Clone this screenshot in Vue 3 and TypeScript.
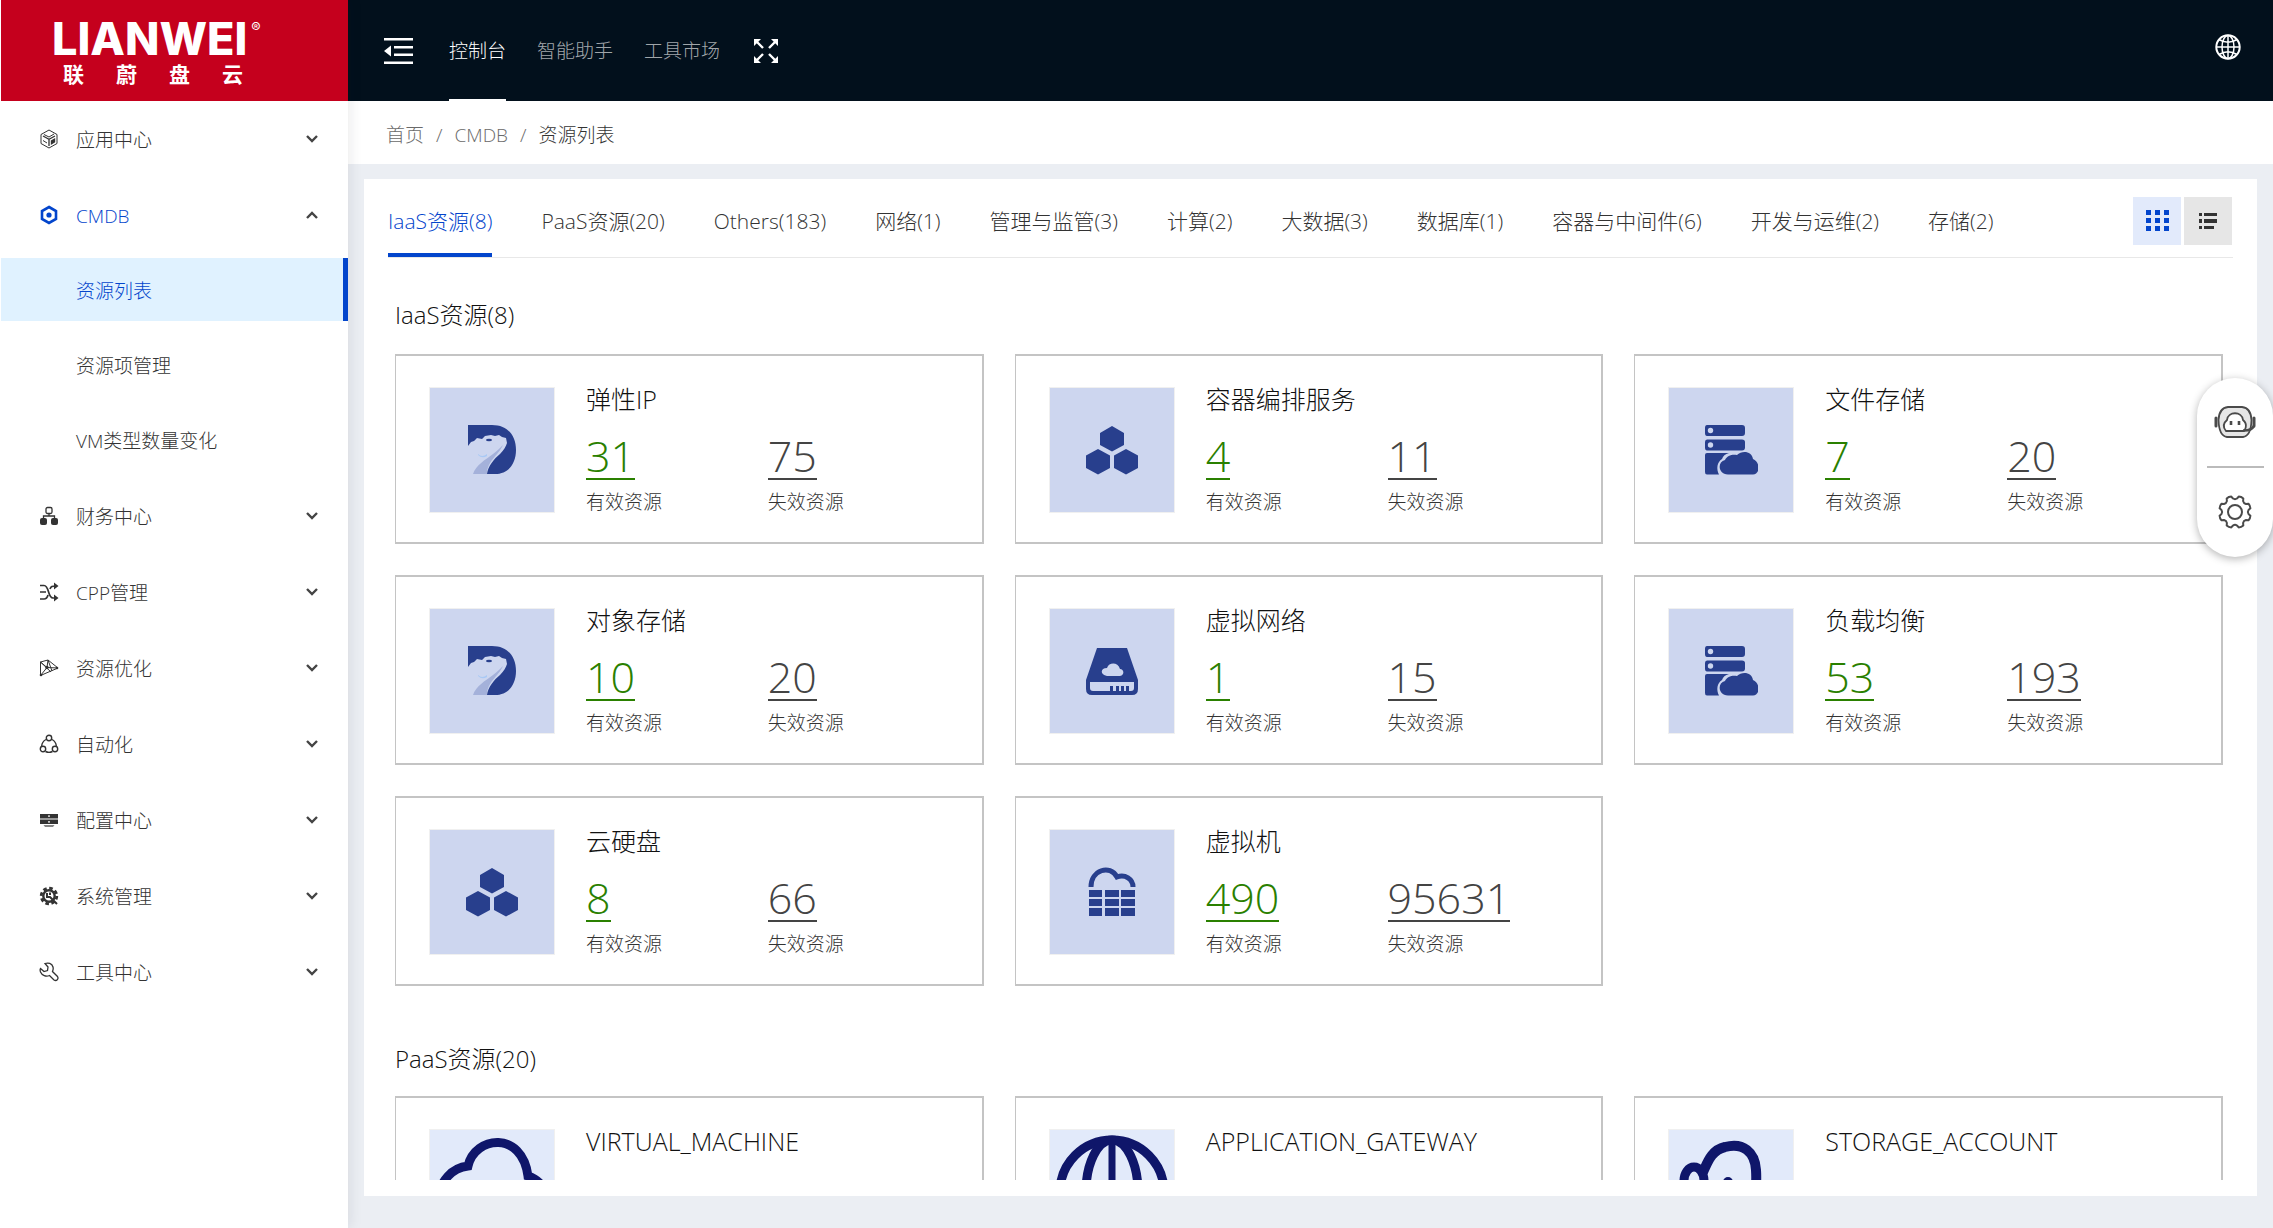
<script setup lang="ts">
import { ref } from 'vue'

interface MenuItem {
  label: string
  icon: string
  active?: boolean
  children?: string[]
}

interface Resource {
  name: string
  icon: string
  valid?: number
  invalid?: number
}

interface ResourceGroup {
  title: string
  light?: boolean
  items: Resource[]
}

const menu: MenuItem[] = [
  { label: '应用中心', icon: 'cube' },
  { label: 'CMDB', icon: 'hex', active: true, children: ['资源列表', '资源项管理', 'VM类型数量变化'] },
  { label: '财务中心', icon: 'tree' },
  { label: 'CPP管理', icon: 'shuffle' },
  { label: '资源优化', icon: 'mesh' },
  { label: '自动化', icon: 'cycle' },
  { label: '配置中心', icon: 'rack' },
  { label: '系统管理', icon: 'cog' },
  { label: '工具中心', icon: 'wrench' },
]

const topNav = ['控制台', '智能助手', '工具市场']

const tabs = [
  'IaaS资源(8)', 'PaaS资源(20)', 'Others(183)', '网络(1)', '管理与监管(3)', '计算(2)',
  '大数据(3)', '数据库(1)', '容器与中间件(6)', '开发与运维(2)', '存储(2)',
]
const activeTab = ref(0)
const view = ref<'grid' | 'list'>('grid')

// Outline of the eight-toothed settings gear, centred on (17, 17).
const gearPath = (() => {
  const at = (deg: number, r: number) => {
    const a = (deg * Math.PI) / 180
    return `${(17 + r * Math.cos(a)).toFixed(1)} ${(17 + r * Math.sin(a)).toFixed(1)}`
  }
  const parts: string[] = []
  for (let k = 0; k < 8; k++) {
    const c = 22.5 + k * 45
    parts.push(`${k ? 'L' : 'M'}${at(c - 14, 13.6)}L${at(c - 9, 15.8)}Q${at(c, 16.6)} ${at(c + 9, 15.8)}L${at(c + 14, 13.6)}Q${at(c + 22.5, 12.2)} ${at(c + 31, 13.6)}`)
  }
  return parts.join('') + 'Z'
})()

const groups: ResourceGroup[] = [
  {
    title: 'IaaS资源(8)',
    items: [
      { name: '弹性IP', icon: 'bear', valid: 31, invalid: 75 },
      { name: '容器编排服务', icon: 'hexes', valid: 4, invalid: 11 },
      { name: '文件存储', icon: 'server', valid: 7, invalid: 20 },
      { name: '对象存储', icon: 'bear', valid: 10, invalid: 20 },
      { name: '虚拟网络', icon: 'disk', valid: 1, invalid: 15 },
      { name: '负载均衡', icon: 'server', valid: 53, invalid: 193 },
      { name: '云硬盘', icon: 'hexes', valid: 8, invalid: 66 },
      { name: '虚拟机', icon: 'vm', valid: 490, invalid: 95631 },
    ],
  },
  {
    title: 'PaaS资源(20)',
    light: true,
    items: [
      { name: 'VIRTUAL_MACHINE', icon: 'cloud' },
      { name: 'APPLICATION_GATEWAY', icon: 'globe' },
      { name: 'STORAGE_ACCOUNT', icon: 'storage' },
    ],
  },
]
</script>

<template>
  <div class="app">
    <aside class="side">
      <div class="logo">
        <div class="logo-en">LIANWEI<sup>®</sup></div>
        <div class="logo-cn"><span>联</span><span>蔚</span><span>盘</span><span>云</span></div>
      </div>
      <ul class="menu">
        <li v-for="m in menu" :key="m.label">
          <button type="button" class="menu-item" :class="{ open: m.active }">
            <svg class="menu-icon" viewBox="0 0 20 20" fill="none" stroke="currentColor" stroke-width="1">
              <template v-if="m.icon === 'cube'">
                <path d="M10 1 18 5.500V14.500L10 19 2 14.500V5.500Z" />
                <path d="M4 7 10 10.300 16 7M10 10.300V17" stroke-width="1.300" />
                <path d="M11.800 11.500 16.200 9V13.200L11.800 16Z" fill="currentColor" stroke="none" />
                <path d="M4 11.500 8 14M5 5.500 10 8 15 5" />
              </template>
              <template v-else-if="m.icon === 'hex'">
                <path d="M10 2 17 6V14L10 18 3 14V6Z" stroke-width="2.600" />
                <circle cx="10" cy="10" r="2.600" fill="currentColor" stroke="none" />
              </template>
              <template v-else-if="m.icon === 'tree'">
                <rect x="7" y="1.500" width="6" height="6" rx="1.500" stroke-width="1.300" />
                <path d="M10 7.500V10M4.500 12.500V10H15.500V12.500" stroke-width="1.300" />
                <rect x="1" y="12" width="7" height="7" rx="2" fill="currentColor" stroke="none" />
                <rect x="12" y="12" width="7" height="7" rx="2" fill="currentColor" stroke="none" />
              </template>
              <template v-else-if="m.icon === 'shuffle'">
                <path d="M1 3.500H5C10.500 3.500 8.500 16 14 16H17M1 10H7M1 17H5C8 17 8.500 15 9 13M11 7C12 4.500 13 4 17 4" stroke-width="1.700" />
                <path d="M15 0.500 19.500 4 15 7.500ZM15 12.500 19.500 16 15 19.500Z" fill="currentColor" stroke="none" />
              </template>
              <template v-else-if="m.icon === 'mesh'">
                <path d="M1.500 4 9 2 19 10 1.500 17.500ZM1.500 4 8 9.500 19 10M9 2 8 9.500 1.500 17.500M1.500 4 12 14M9 2 13 13" />
                <circle cx="8" cy="9.500" r="1.700" fill="currentColor" stroke="none" />
                <circle cx="18" cy="10" r="1.300" fill="currentColor" stroke="none" />
                <circle cx="2" cy="17" r="1.300" fill="currentColor" stroke="none" />
              </template>
              <template v-else-if="m.icon === 'cycle'">
                <g stroke-width="1.400">
                  <circle cx="10" cy="4" r="2.700" />
                  <circle cx="4" cy="15" r="2.700" />
                  <circle cx="16" cy="15" r="2.700" />
                  <path d="M7 5.500A8 8 0 0 0 2.700 12M13 5.500A8 8 0 0 1 17.300 12M6.500 17.500A8 8 0 0 0 13.500 17.500" />
                </g>
              </template>
              <template v-else-if="m.icon === 'rack'">
                <g fill="currentColor" stroke="none">
                  <path d="M1 4H19V8.500H1ZM9.300 5.300V7H10.700V5.300Z" fill-rule="evenodd" />
                  <path d="M1 9.500H19V14H1ZM9.300 11V12.700H10.700V11Z" fill-rule="evenodd" />
                  <path d="M4.500 15H15.500L14 17H6Z" opacity=".6" />
                </g>
              </template>
              <template v-else-if="m.icon === 'cog'">
                <circle cx="10" cy="10" r="7.800" stroke-width="2.800" stroke-dasharray="3.600 2.520" />
                <circle cx="10" cy="10" r="5.700" stroke-width="2.400" />
                <path d="M8 7V11H11L18 18M11 6.500V9" stroke-width="2" />
              </template>
              <template v-else>
                <path d="M6 1.500C9 .5 13 1 14 5 14.500 7 14 8.500 13.500 9.500L18.500 14.500C20 17 17.500 19.500 15 18L10.500 13.500C7 15 3 13.500 1.500 10 1 8.500 1.200 7 1.500 6.500L5 9.500 8.500 8.500 9 5Z" stroke-width="1.300" />
              </template>
            </svg>
            <span>{{ m.label }}</span>
            <svg class="chev" viewBox="0 0 12 8" fill="none" stroke="#444" stroke-width="2.400">
              <path :d="m.active ? 'M1 7 6 2 11 7' : 'M1 1 6 6 11 1'" />
            </svg>
          </button>
          <ul v-if="m.children" class="sub">
            <li v-for="(c, i) in m.children" :key="c">
              <a href="#" :class="{ current: i === 0 }">{{ c }}</a>
            </li>
          </ul>
        </li>
      </ul>
    </aside>

    <div class="body">
      <header class="top">
        <button type="button" class="icon-btn" aria-label="收起菜单">
          <svg width="29" height="26" viewBox="0 0 29 26" fill="#fff">
            <path d="M0 0H29V2.500H0ZM10 8H29V10.500H10ZM10 15.500H29V18H10ZM0 23.500H29V26H0ZM7 7.500V18.500L0 13Z" />
          </svg>
        </button>
        <nav class="top-nav">
          <a v-for="(n, i) in topNav" :key="n" href="#" :class="{ on: i === 0 }">{{ n }}</a>
        </nav>
        <button type="button" class="icon-btn" aria-label="全屏">
          <svg width="24" height="24" viewBox="0 0 24 24" fill="#fff" stroke="#fff" stroke-width="2.400">
            <path d="M3 3 9 9M21 3 15 9M3 21 9 15M21 21 15 15" />
            <path d="M0 0H7L0 7ZM24 0V7L17 0ZM0 24V17L7 24ZM24 24H17L24 17Z" stroke="none" />
          </svg>
        </button>
        <button type="button" class="icon-btn lang" aria-label="语言">
          <svg width="26" height="26" viewBox="0 0 26 26" fill="none" stroke="#fff" stroke-width="1.500">
            <circle cx="13" cy="13" r="11.700" stroke-width="2" />
            <ellipse cx="13" cy="13" rx="6" ry="11.500" />
            <path d="M13 1V25M1 13H25M4 5.500Q13 11 22 5.500M4 20.500Q13 15 22 20.500" />
          </svg>
        </button>
      </header>

      <nav class="crumbs" aria-label="面包屑">
        <a href="#">首页</a><i>/</i><a href="#">CMDB</a><i>/</i><span>资源列表</span>
      </nav>

      <main class="main">
        <section class="panel">
          <div class="tabbar">
            <div class="tabs" role="tablist">
              <button
                v-for="(t, i) in tabs"
                :key="t"
                type="button"
                role="tab"
                :aria-selected="i === activeTab"
                :class="{ on: i === activeTab }"
                @click="activeTab = i"
              >{{ t }}</button>
            </div>
            <div class="views">
              <button type="button" aria-label="卡片视图" :class="{ on: view === 'grid' }" @click="view = 'grid'">
                <svg width="24" height="22" viewBox="0 0 24 22" fill="currentColor">
                  <path d="M1 0h5v5h-5zM10 0h5v5h-5zM19 0h5v5h-5zM1 8h5v5h-5zM10 8h5v5h-5zM19 8h5v5h-5zM1 16h5v5h-5zM10 16h5v5h-5zM19 16h5v5h-5z" />
                </svg>
              </button>
              <button type="button" aria-label="列表视图" :class="{ on: view === 'list' }" @click="view = 'list'">
                <svg width="18" height="16" viewBox="0 0 18 16" fill="currentColor">
                  <path d="M0 0h3v3h-3zM5 0h13v3h-13zM0 6h3v4h-3zM5 6h13v4h-13zM0 13h3v3h-3zM5 13h10v3h-10z" />
                </svg>
              </button>
            </div>
          </div>

          <div class="scroll">
            <section v-for="g in groups" :key="g.title" class="group">
              <h2>{{ g.title }}</h2>
              <div class="grid">
                <article v-for="r in g.items" :key="r.name" class="card">
                  <div class="tile" :class="{ light: g.light }">
                    <svg v-if="!g.light" width="54" height="54" viewBox="0 0 54 54" fill="#283f8d">
                      <template v-if="r.icon === 'bear'">
                        <path d="M3 2H27C43 2 51 13 51 27 51 41 43 51 30 51H22C23 43 29 36 35 31 39 27 41 23 42 20L41 15 37 14 34 12 30 13 26 12 20 13 17 16 12 15 9 18 6 19 3 23Z" />
                        <path d="M38 22C33 33 22 38 22 51H8C11 42 20 37 28 31 32 28 35 25 38 22Z" fill="#a4b1da" />
                        <path d="M13 31Q17 35 22 31V33Q17 36 13 32Z" fill="#a9c9f5" />
                        <ellipse cx="24" cy="17" rx="3" ry="1.300" />
                      </template>
                      <template v-else-if="r.icon === 'hexes'">
                        <path d="M27 3 39 10V22L27 28.500 15 22V10ZM13 26 25 32.500V45L13 51.500 1 45V32.500ZM41 26 53 32.500V45L41 51.500 29 45V32.500Z" />
                      </template>
                      <template v-else-if="r.icon === 'server'">
                        <path d="M3 2H38Q41 2 41 5V10Q41 13 38 13H3Q1 13 1 10V5Q1 2 3 2ZM3 16.500H38Q41 16.500 41 19V24.500Q41 27.500 38 27.500H3Q1 27.500 1 24.500V19Q1 16.500 3 16.500Z" />
                        <path d="M3 30H25C21 31 19 33 18 36 13 39 12 46 15 51.500H3Q1 51.500 1 49V32Q1 30 3 30Z" />
                        <path d="M24 51.500C14 51 13 39 21 37 23 32 29 31 33 32 38 27 48 28 49 36 57 40 56 51 49 51.500Z" />
                        <circle cx="6.500" cy="7.500" r="2.700" fill="#cdd6ef" />
                        <circle cx="6.500" cy="22" r="2.700" fill="#cdd6ef" />
                      </template>
                      <template v-else-if="r.icon === 'disk'">
                        <path d="M12 4H42L53 36V45Q53 51 47 51H7Q1 51 1 45V36ZM22 32H35C40 31 39 25 35 25 33 18 24 18 22 24 15 24 15 31 22 32ZM5 38V44Q5 47 8 47H46Q49 47 49 44V38Z" fill-rule="evenodd" />
                        <path d="M25 42h3v5h-3zM31 42h3v5h-3zM36 42h3v5h-3zM41 42h3v5h-3z" />
                      </template>
                      <template v-else>
                        <path d="M6 22C6 5 25 -1 32 12 40 9 48 14 48 22" fill="none" stroke="#283f8d" stroke-width="5" />
                        <path d="M4 25h13v7h-13zM20 25h14v7h-14zM36 25h14v7h-14zM4 34h13v7h-13zM20 34h14v7h-14zM36 34h14v7h-14zM4 43h13v8h-13zM20 43h14v8h-14zM36 43h14v8h-14z" />
                      </template>
                    </svg>
                    <svg v-else class="fill" viewBox="0 0 124 124" fill="none" stroke="#0f166a" stroke-width="9">
                      <template v-if="r.icon === 'cloud'">
                        <path d="M38 36C45 6 92 0 98 46 110 50 118 60 116 74 112 90 104 94 92 94H30C-2 90 4 40 38 36Z" />
                      </template>
                      <template v-else-if="r.icon === 'globe'">
                        <circle cx="62" cy="62" r="52" />
                        <ellipse cx="62" cy="62" rx="26" ry="52" />
                        <path d="M62 10V114" stroke-width="7" />
                      </template>
                      <template v-else>
                        <ellipse cx="25" cy="51" rx="10" ry="14" />
                        <path d="M34 42C38 34 42 20 56 17 74 12 86 22 87 40 88 56 86 72 78 84" stroke-width="10" />
                        <circle cx="59" cy="52" r="5" fill="#0f166a" stroke="none" />
                      </template>
                    </svg>
                  </div>
                  <div class="info">
                    <h3>{{ r.name }}</h3>
                    <div v-if="r.valid !== undefined" class="stats">
                      <div class="stat ok">
                        <a href="#">{{ r.valid }}</a>
                        <span>有效资源</span>
                      </div>
                      <div class="stat">
                        <a href="#">{{ r.invalid }}</a>
                        <span>失效资源</span>
                      </div>
                    </div>
                  </div>
                </article>
              </div>
            </section>
          </div>
        </section>
      </main>
    </div>

    <div class="float">
      <button type="button" class="icon-btn" aria-label="智能客服">
        <svg width="42" height="34" viewBox="0 0 42 34" fill="none" stroke="#4a4a4a" stroke-width="1.800">
          <path d="M14 2H28Q37 3 37.500 15 37 31 29 32H13Q5 31 4.500 15 5 3 14 2Z" fill="#e6e6e6" />
          <path d="M12 26Q7 20 13 15C14 6 28 6 29 15 35 20 30 26 30 26Z" fill="#fff" />
          <path d="M17 16V20M25 16V20" stroke-width="2.600" />
          <path d="M2 13V21M40 13V21" stroke-width="3" stroke-linecap="round" />
          <path d="M40 21Q37 26 29 25.500" stroke-width="2.600" />
        </svg>
      </button>
      <hr />
      <button type="button" class="icon-btn" aria-label="设置">
        <svg width="34" height="34" viewBox="0 0 34 34" fill="none" stroke="#4a4a4a" stroke-width="2" stroke-linejoin="round">
          <path :d="gearPath" />
          <circle cx="17" cy="17" r="7" />
        </svg>
      </button>
    </div>
  </div>
</template>

<style>
body {
  margin: 0;
}
</style>

<style scoped>
* {
  box-sizing: border-box;
}
.app {
  display: flex;
  height: 100vh;
  overflow: hidden;
  background: #ebeef3;
  color: #333;
  font-family: "Open Sans", "Noto Sans CJK SC", sans-serif;
  font-size: 19px;
  font-weight: 300;
  line-height: 28px;
}
button {
  border: 0;
  padding: 0;
  background: none;
  font: inherit;
  color: inherit;
  cursor: pointer;
}
a {
  color: inherit;
  text-decoration: none;
}
ul {
  list-style: none;
  margin: 0;
  padding: 0;
}
h2,
h3 {
  margin: 0;
  font-weight: 300;
  color: #111;
}
svg {
  display: block;
}

.side {
  position: relative;
  flex: 0 0 348px;
  border-left: 1px solid #fff;
  background: #fff;
  box-shadow: 3px 0 12px rgba(20, 20, 40, 0.08);
  z-index: 1;
}
.logo {
  height: 101px;
  padding: 16px 0 0 51px;
  background: #c5001d;
  color: #fff;
}
.logo-en {
  display: flex;
  font-family: Inter, sans-serif;
  font-size: 45px;
  font-weight: 800;
  line-height: 46px;
}
.logo-en sup {
  margin: 5px 0 0 4px;
  font-size: 14px;
  font-weight: 400;
  line-height: 14px;
}
.logo-cn {
  display: flex;
  gap: 32px;
  padding: 0 0 0 11px;
  font-family: "Liberation Sans", "Noto Sans CJK SC", sans-serif;
  font-size: 21px;
  font-weight: 700;
  line-height: 26px;
}
.menu {
  padding-top: 6px;
}
.menu > li {
  margin-bottom: 13px;
}
.menu-item {
  display: flex;
  align-items: center;
  width: 100%;
  height: 63px;
  padding: 0 30px 0 38px;
  text-align: left;
}
.menu-item span {
  padding-top: 2px;
}
.menu-item.open {
  margin-bottom: 12px;
  color: #0345cc;
}
.menu-icon {
  width: 20px;
  height: 20px;
  margin-right: 17px;
}
.chev {
  width: 12px;
  height: 8px;
  margin-left: auto;
}
.sub li + li {
  margin-top: 12px;
}
.sub a {
  display: block;
  padding: 3px 0 0 75px;
  line-height: 60px;
}
.sub a.current {
  border-right: 5px solid #0345cc;
  background: #e0f2ff;
  color: #0345cc;
}

.body {
  display: flex;
  flex-direction: column;
  flex: 1;
  min-width: 0;
}
.top {
  display: flex;
  align-items: center;
  height: 101px;
  padding: 0 32px 0 36px;
  background: #02101c;
}
.top-nav {
  display: flex;
  gap: 31px;
  margin: 0 34px 0 36px;
}
.top-nav a {
  padding-top: 4px;
  color: rgba(255, 255, 255, 0.65);
  line-height: 95px;
  border-bottom: 2px solid transparent;
}
.top-nav a.on {
  color: #fff;
  border-color: #fff;
}
.lang {
  margin: 0 0 8px auto;
}
.crumbs {
  display: flex;
  gap: 12px;
  padding: 20px 38px 15px;
  background: #fff;
  color: #6a6a6a;
}
.crumbs i {
  font-style: normal;
}
.crumbs span {
  color: #333;
}

.main {
  display: flex;
  flex: 1;
  min-height: 0;
  padding: 15px 16px 32px;
}
.panel {
  display: flex;
  flex-direction: column;
  flex: 1;
  min-width: 0;
  padding: 14px 24px 16px;
  background: #fff;
}
.tabbar {
  display: flex;
  align-items: center;
  justify-content: space-between;
  border-bottom: 1px solid #e8e8e8;
}
.tabs {
  display: flex;
  gap: 49px;
  font-size: 21px;
}
.tabs button {
  height: 64px;
  padding-bottom: 4px;
  border-bottom: 4px solid transparent;
  white-space: nowrap;
}
.tabs button.on {
  border-color: #0345cc;
  color: #0345cc;
}
.views {
  display: flex;
  gap: 3px;
  margin-bottom: 8px;
  padding-right: 1px;
}
.views button {
  display: grid;
  place-items: center;
  width: 48px;
  height: 48px;
  background: #e6e6e6;
}
.views button.on {
  background: #e2eafb;
  color: #0345cc;
}
.scroll {
  flex: 1;
  min-height: 0;
  overflow: auto;
  scrollbar-width: none;
  padding: 38px 10px 0 7px;
}
.group + .group {
  margin-top: 54px;
}
.group h2 {
  font-size: 24px;
  line-height: 38px;
  margin-bottom: 20px;
}
.group + .group h2 {
  margin-bottom: 18px;
}
.grid {
  display: grid;
  grid-template-columns: repeat(3, minmax(0, 1fr));
  gap: 31px;
}
.card {
  display: flex;
  gap: 31px;
  height: 190px;
  padding: 31px 32px 0 33px;
  border: 2px solid #c4c4c4;
  border-left-width: 1px;
}
.tile {
  display: grid;
  place-items: center;
  flex: none;
  width: 126px;
  height: 126px;
  border: 1px solid #f0f0f0;
  background: #cdd6ef;
}
.tile.light {
  background: #e2eafa;
}
.fill {
  width: 124px;
  height: 124px;
}
.info {
  flex: 1;
  min-width: 0;
}
.info h3 {
  font-size: 25px;
  line-height: 24px;
  white-space: nowrap;
}
.stats {
  display: flex;
  margin-top: 23px;
}
.stat {
  flex: 1 0 0;
  min-width: 0;
}
.stat a {
  display: block;
  width: fit-content;
  border-bottom: 2px solid;
  color: #444;
  font-size: 43px;
  line-height: 44px;
}
.stat.ok a {
  color: #2a8000;
}
.stat span {
  display: block;
  margin-top: 8px;
}

.float {
  position: fixed;
  top: 378px;
  right: 0;
  z-index: 2;
  display: flex;
  flex-direction: column;
  align-items: center;
  width: 76px;
  padding: 27px 0 28px;
  border-radius: 38px;
  background: #fff;
  box-shadow: 0 2px 8px rgba(0, 0, 0, 0.3);
}
.float hr {
  width: 57px;
  height: 2px;
  margin: 27px 0;
  border: 0;
  background: #bbb;
}
</style>
